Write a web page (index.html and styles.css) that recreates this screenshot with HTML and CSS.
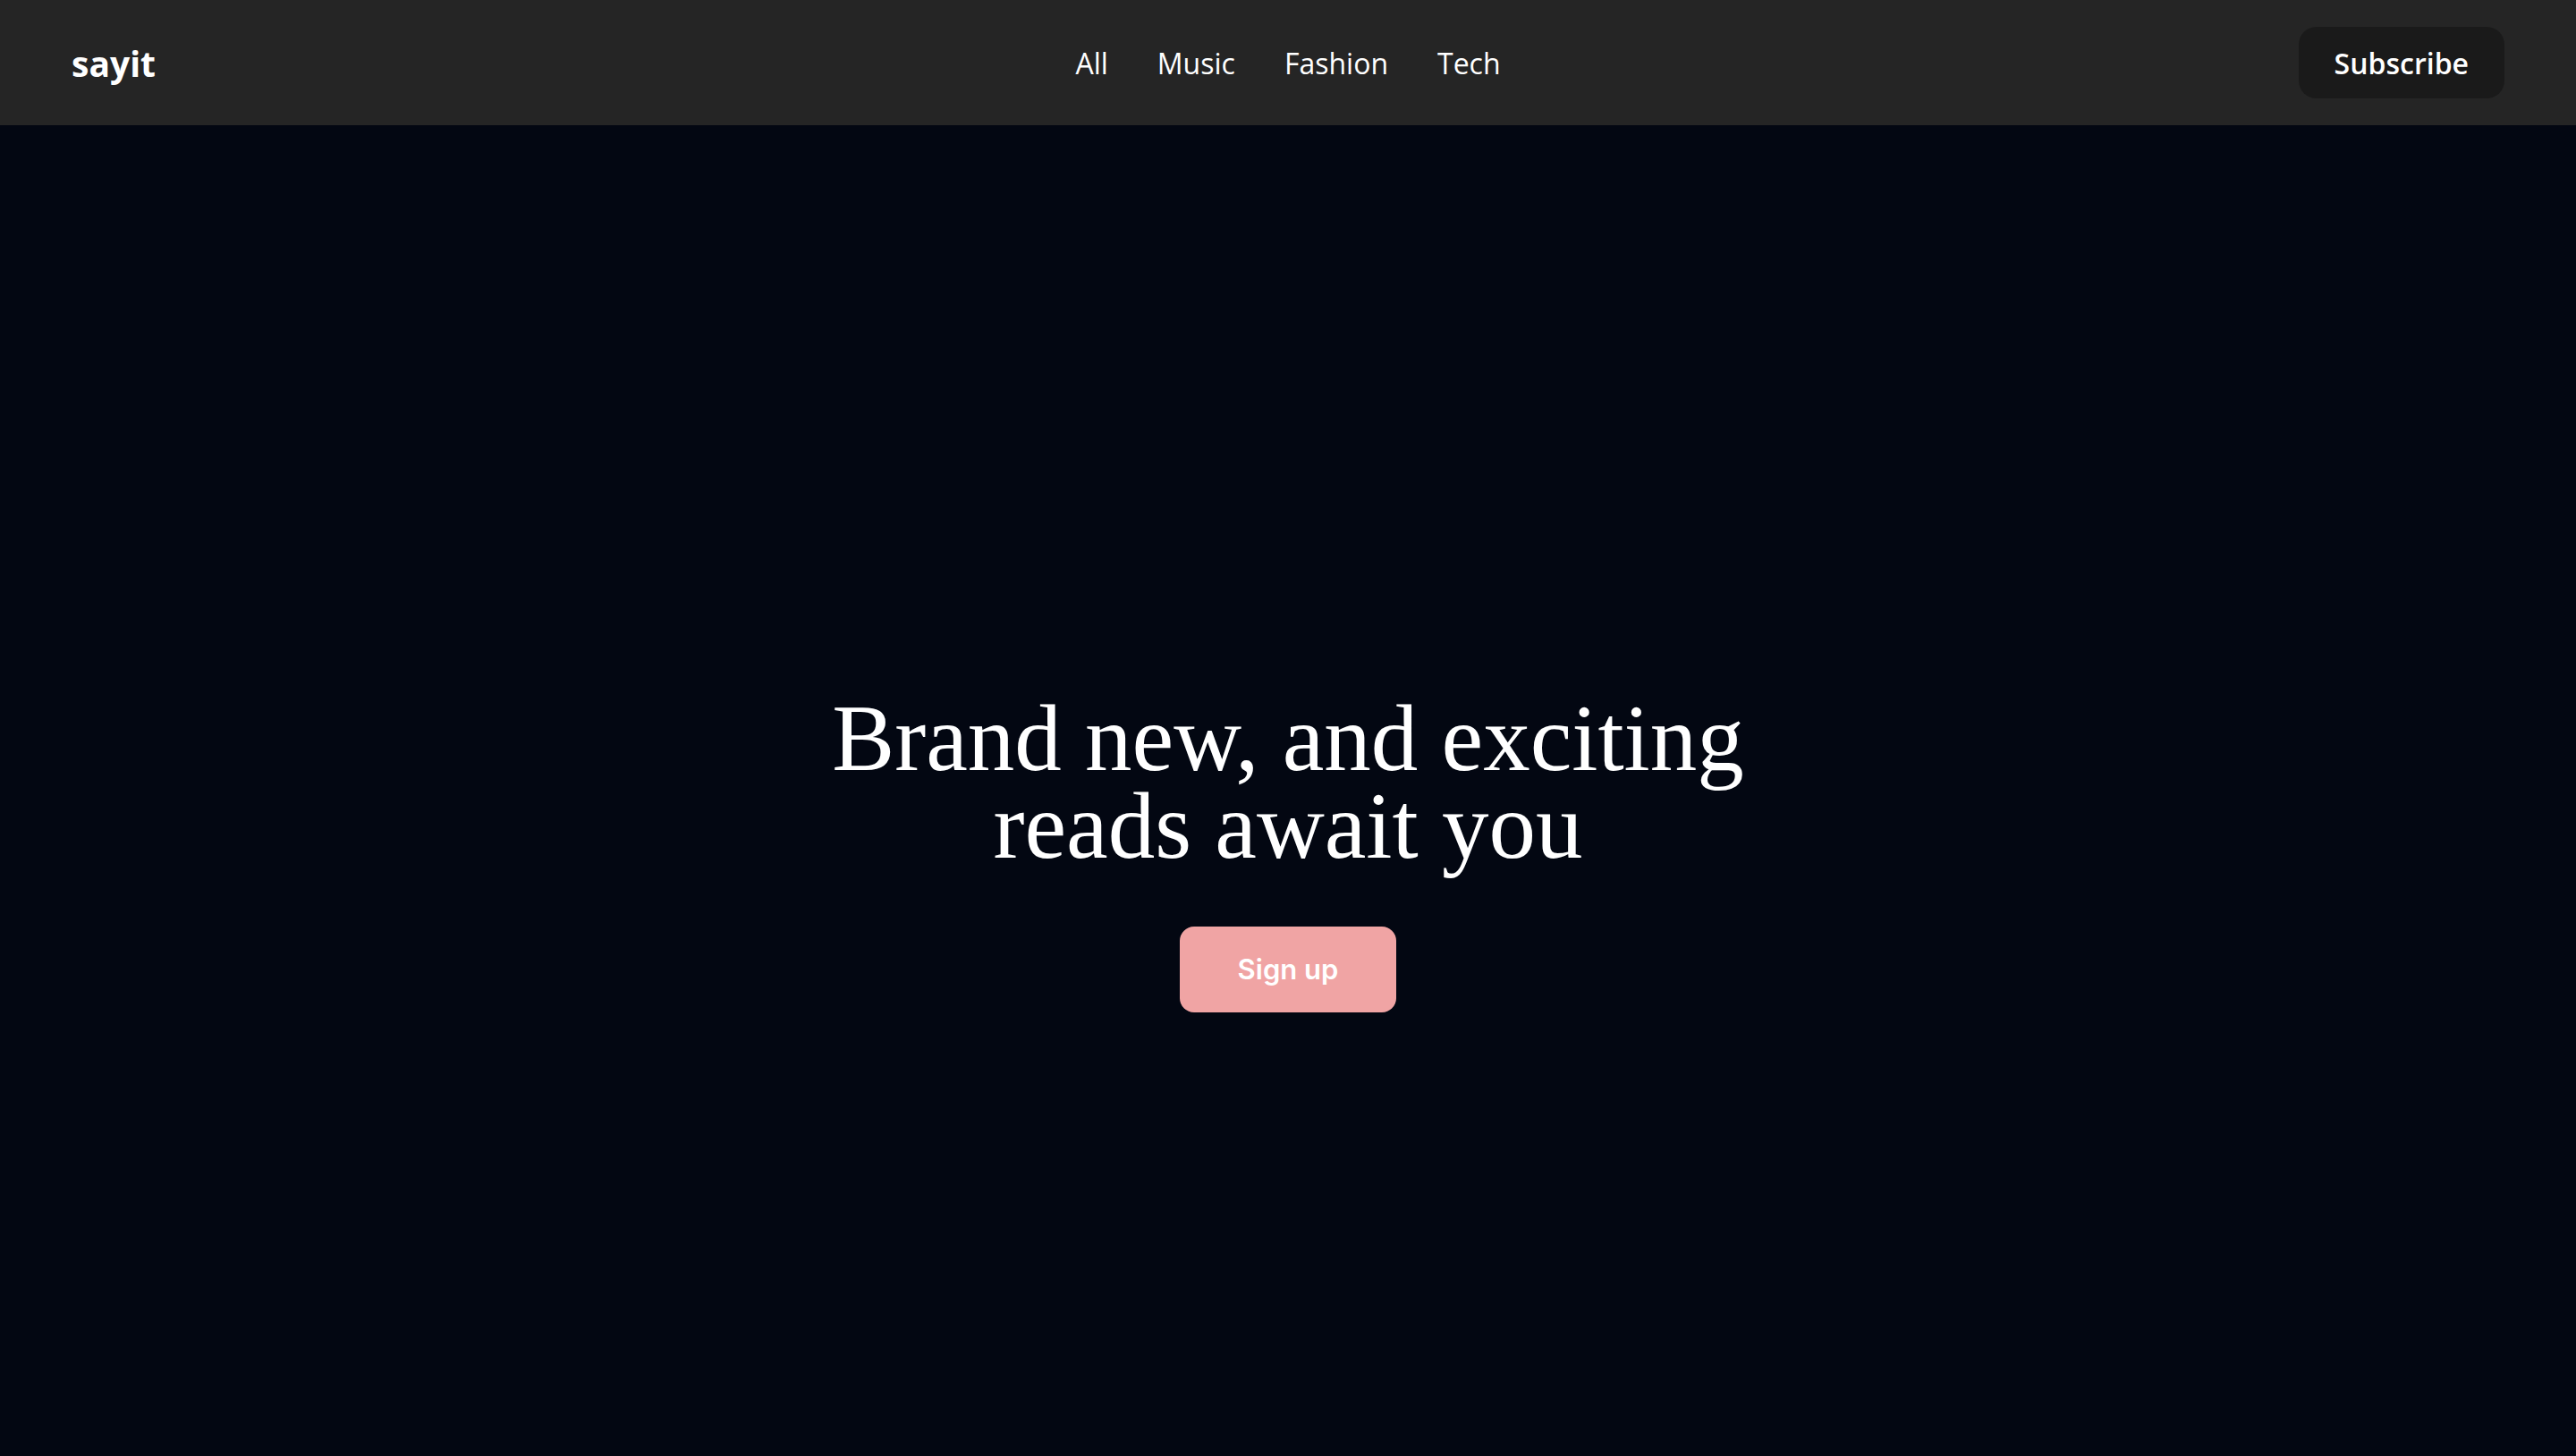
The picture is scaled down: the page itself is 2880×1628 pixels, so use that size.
FILE: index.html
```html
<!DOCTYPE html>
<html lang="en">
<head>
<meta charset="utf-8">
<title>sayit</title>
<link rel="stylesheet" href="styles.css">
</head>
<body>
<header class="topbar">
  <a class="logo" href="#">sayit</a>
  <nav class="nav">
    <a href="#">All</a>
    <a href="#">Music</a>
    <a href="#">Fashion</a>
    <a href="#">Tech</a>
  </nav>
  <div class="actions">
    <a class="subscribe" href="#">Subscribe</a>
  </div>
</header>
<main class="hero">
  <h1 class="headline"><span class="line">Brand new, and exciting</span><span class="line">reads await you</span></h1>
  <a class="signup" href="#">Sign up</a>
</main>
</body>
</html>
```

FILE: styles.css
```css
* { box-sizing: border-box; }
html, body { margin: 0; padding: 0; }
body {
  background: #030712;
  color: #ffffff;
  font-family: "Open Sans", "Noto Sans", sans-serif;
}
a { color: inherit; text-decoration: none; }

.topbar {
  height: 140px;
  background: #252525;
  display: grid;
  grid-template-columns: 1fr auto 1fr;
  align-items: center;
  padding: 0 80px;
}
.logo {
  font-size: 39px;
  font-weight: 700;
  justify-self: start;
}
.nav {
  display: flex;
  gap: 55px;
  font-size: 32px;
  font-weight: 400;
}
.actions { justify-self: end; }
.subscribe {
  display: flex;
  align-items: center;
  height: 80px;
  padding: 0 40px;
  background: #1a1a1a;
  border-radius: 20px;
  font-size: 32px;
  font-weight: 600;
}

.hero {
  min-height: 100vh;
  display: flex;
  flex-direction: column;
  align-items: center;
  justify-content: center;
}
.headline {
  margin: 0;
  display: flex;
  flex-direction: column;
  align-items: center;
  font-family: "Liberation Serif", "Times New Roman", serif;
  font-weight: 400;
  font-size: 105px;
  line-height: 98px;
  text-align: center;
}
.line { display: block; }
.signup {
  margin-top: 63px;
  height: 96px;
  padding: 0 65px;
  display: flex;
  align-items: center;
  background: #f0a4a4;
  border-radius: 16px;
  font-family: Inter, "Noto Sans", sans-serif;
  font-weight: 600;
  font-size: 31px;
}
```
